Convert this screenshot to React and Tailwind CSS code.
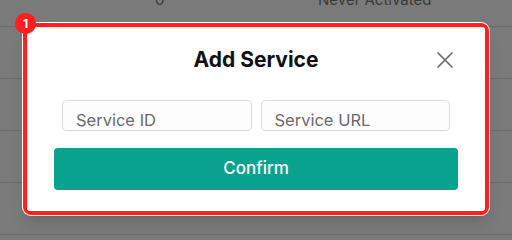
import React from "react";

const rows = [
  { count: "0", status: "Never Activated" },
  { count: "3", status: "Active" },
  { count: "5", status: "Active" },
  { count: "2", status: "Active" },
  { count: "11", status: "Never Activated" },
];

const App = () => {
  return (
    <div
      className="relative h-[240px] w-[512px] overflow-hidden bg-[#7a7a7a]"
      style={{ fontFamily: "Inter, 'Noto Sans', sans-serif" }}
    >
      {/* table behind the overlay */}
      <div className="-mt-[25px] flex flex-col">
        {rows.map((r, i) => (
          <div
            key={i}
            className="flex h-[52px] items-center border-b border-[#6c6c6c] text-[15px] text-[#3a3a3a]"
          >
            <span className="ml-[155px] w-[163px]">{r.count}</span>
            <span>{r.status}</span>
          </div>
        ))}
      </div>

      {/* highlighted modal */}
      <div className="absolute left-[22px] top-[22px] w-[468px] rounded-[9px] bg-white p-px shadow-lg">
        <div className="rounded-[8px] border-4 border-[#ff1f1f]">
          <div className="relative flex flex-col rounded-[3px] bg-white px-[27px] pb-[21px] pt-[19px]">
            <h2 className="text-center text-[21px] font-bold leading-7 text-[#111]">
              Add Service
            </h2>
            <button className="absolute right-[32px] top-[25px] text-[#6a6a6a]">
              <svg width="16" height="16" viewBox="0 0 16 16" fill="none">
                <path
                  d="M1 1L15 15M15 1L1 15"
                  stroke="currentColor"
                  strokeWidth="1.7"
                  strokeLinecap="round"
                />
              </svg>
            </button>

            <div className="mx-[8px] mt-[26px] flex gap-[9px]">
              <input
                placeholder="Service ID"
                className="h-[31px] w-full rounded-[4px] border border-[#d9d9e1] bg-[#fdfdfd] px-[13px] pt-[8px] text-[16.5px] text-[#333] placeholder:text-[#6a6a6a] outline-none"
              />
              <input
                placeholder="Service URL"
                className="h-[31px] w-full rounded-[4px] border border-[#d9d9e1] bg-[#fdfdfd] px-[13px] pt-[8px] text-[16.5px] text-[#333] placeholder:text-[#6a6a6a] outline-none"
              />
            </div>

            <button className="mt-[17px] h-[42px] w-full rounded-[4px] bg-[#09a28e] text-[17px] font-medium text-white">
              Confirm
            </button>
          </div>
        </div>
      </div>

      {/* step badge */}
      <div className="absolute left-[15px] top-[13px] flex h-[21px] w-[21px] items-center justify-center rounded-full bg-[#ff1f1f] text-[12px] font-bold text-white">
        1
      </div>
    </div>
  );
};

export default App;
